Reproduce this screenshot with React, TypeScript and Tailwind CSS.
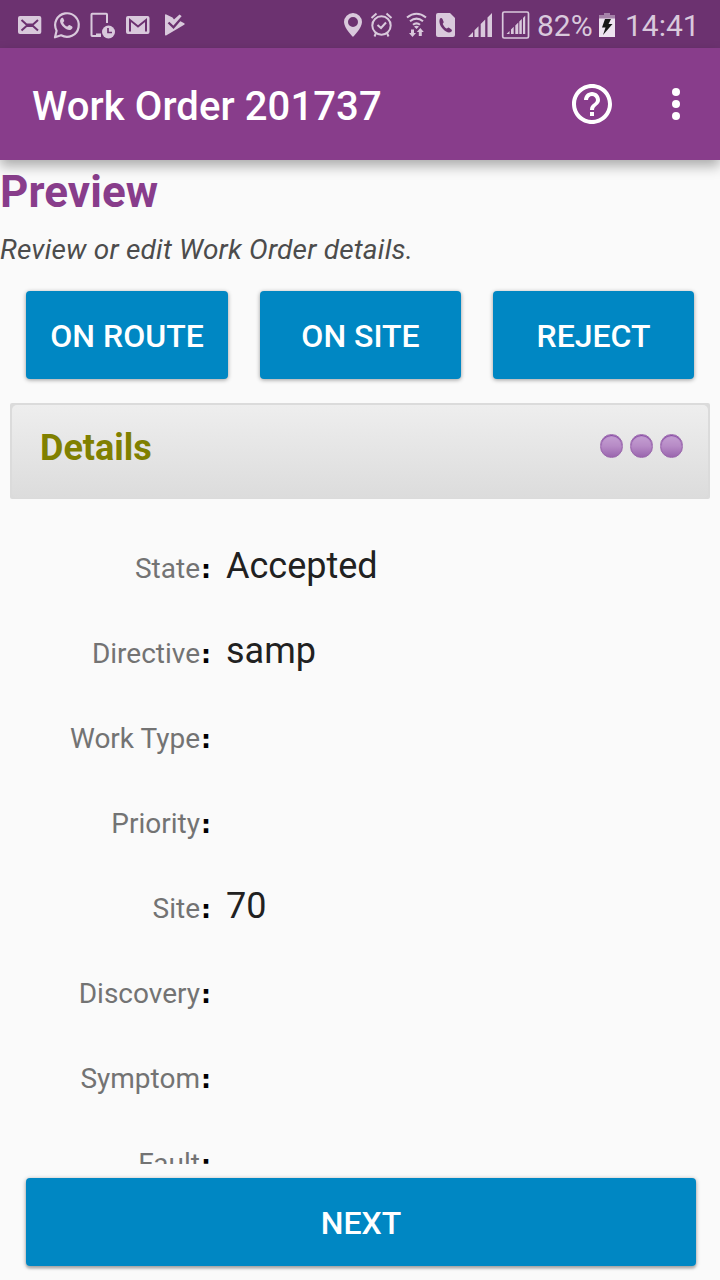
import type { ReactNode } from "react";

const rows: [string, string][] = [
  ["State", "Accepted"],
  ["Directive", "samp"],
  ["Work Type", ""],
  ["Priority", ""],
  ["Site", "70"],
  ["Discovery", ""],
  ["Symptom", ""],
  ["Fault", ""],
];

// Status bar glyph: a slice of the 48px high bar, starting at x and w pixels wide.
function Glyph({ x, w, children }: { x: number; w: number; children: ReactNode }) {
  return (
    <svg width={w} height={48} viewBox={`${x} 0 ${w} 48`} fill="#d9c9dc" className="block shrink-0">
      {children}
    </svg>
  );
}

function StatusBar() {
  return (
    <div className="flex h-12 shrink-0 justify-between bg-[#6c3270] text-[#d9c9dc]">
      <div className="flex">
        <Glyph x={0} w={48}>
          <rect x="18" y="16" width="23.3" height="18" rx="2" />
          <path d="M21.500 20l5 4.500h6.500L38 20M21.500 30.500l5-4.500h6.500l5 4.500" stroke="#6c3270" strokeWidth="2" fill="none" />
        </Glyph>
        <Glyph x={48} w={37}>
          <path d="M55 37.300l1.600-6.600a11.800 11.800 0 1 1 4.500 4.600z" fill="none" stroke="#d9c9dc" strokeWidth="2.200" strokeLinejoin="round" />
          <path d="M61 18.500c-2 2.200-.5 5.700 2.500 8.500 3 2.800 6.500 4.200 8.500 1.800.8-1 .7-2-.2-2.500l-2.300-1.200c-1-.4-1.500 1.800-2.500 1.400-1.700-.7-3-2.100-3.800-3.800-.2-.8 1.300-1.300 1-2.300l-1-2.200c-.5-.9-1.600-.5-2.200.3z" />
        </Glyph>
        <Glyph x={85} w={35}>
          <path d="M107 23v-8.500q0-.700-.700-.700H92.200q-.7 0-.7.700v20.800q0 .7.700.7H101" fill="none" stroke="#d9c9dc" strokeWidth="2" />
          <rect x="96" y="33.500" width="5" height="2" />
          <circle cx="108.500" cy="32" r="6.500" />
          <path d="M108 28v4.500h4" fill="none" stroke="#6c3270" strokeWidth="1.700" />
        </Glyph>
        <Glyph x={120} w={36}>
          <rect x="126" y="16" width="23.500" height="18" rx="2" />
          <path d="M130 31.500V20l8 6.500 8-6.500v11.500" fill="none" stroke="#6c3270" strokeWidth="2" />
        </Glyph>
        <Glyph x={156} w={34}>
          <path d="M165 15.300q0-1.500 1.300-.9l6.200 3 1.500 2 5.500-5 2 1.500-1.500 5 4.200 2.400q1.200.8 0 1.500l-17.700 10.500q-1.500.8-1.500-.7z" />
          <path d="M168.500 22.500l5 4.800L182 17.500" fill="none" stroke="#6c3270" strokeWidth="2.300" />
        </Glyph>
      </div>
      <div className="flex">
        <Glyph x={338} w={30}>
          <path fillRule="evenodd" d="M353 13a9 9 0 0 0-9 9c0 6 9 15 9 15s9-9 9-15a9 9 0 0 0-9-9zm0 4a5 5 0 1 1 0 10 5 5 0 0 1 0-10z" />
        </Glyph>
        <Glyph x={368} w={30}>
          <g fill="none" stroke="#d9c9dc" strokeWidth="2">
            <circle cx="381.500" cy="25.500" r="9.200" />
            <path d="M371.500 18l5-4.500M391.500 18l-5-4.500M376 33l-1.500 3.500M387 33l1.500 3.500M377.500 25l3.500 3 5-5.500" />
          </g>
        </Glyph>
        <Glyph x={398} w={32}>
          <g fill="none" stroke="#d9c9dc" strokeWidth="2.100">
            <path d="M407 17.500q9.500-7.500 19 0M410 21.300q6.500-5.300 13 0M413 24.800q3.500-3 7 0" />
          </g>
          <path d="M414 26.500q2.500-1.500 5 0l-2.500 2.500zM411 29.500h3v3.500h2l-3.500 4L409 33h2zM420.300 28l3.500 4h-2v4h-3v-4h-2z" />
        </Glyph>
        <Glyph x={430} w={32}>
          <path d="M438 13h12l5 5v17q0 2-2 2h-15q-2 0-2-2V15q0-2 2-2z" />
          <path d="M440 18.500c-1.500 3 0 7.500 3 10.500 3 3 6 4.500 8.500 2.500.7-.8.5-1.800-.3-2.300l-2.200-1.500c-1.300-.5-1.500 1.300-2.500.8-1.700-1-3-2.700-3.700-4.500-.2-.8 1.300-1.200.8-2.300l-1.100-2.800c-.6-1.100-1.800-1.200-2.500-.4z" fill="#6c3270" />
        </Glyph>
        <Glyph x={462} w={36}>
          <path d="M468 37l5-5v5zM474.500 37v-6.700l4-4V37zM480.700 37V24.100l4.500-4.500V37zM487.500 37V17.500l4.500-4.500V37z" />
        </Glyph>
        <Glyph x={498} w={39}>
          <rect x="502.700" y="12" width="25.800" height="26" rx="1.500" fill="none" stroke="#d9c9dc" strokeWidth="1.700" />
          <path d="M506.500 34l3-3v3zM511 34v-4.500l2.700-2.700V34zM515.300 34v-8.500l3-3V34zM519.300 34V21.500l2.500-2.500V34zM523 34v-16l2.200-2.200V34z" />
        </Glyph>
        <span className="w-[58px] text-[30px] leading-[51px]">82%</span>
        <Glyph x={595} w={30}>
          <path d="M604 13h6v2h5v4h-16v-4h5z" fill="#a481a8" />
          <rect x="599" y="18.500" width="16" height="18.500" fill="#eee4f0" />
          <path d="M605 19h6l-2.500 5h4l-9.500 11 2.500-7.500h-3.500z" fill="#171717" />
        </Glyph>
        <span className="w-[95px] text-[30px] leading-[51px]">14:41</span>
      </div>
    </div>
  );
}

function AppBar() {
  return (
    <header className="relative z-10 flex h-28 shrink-0 items-center bg-[#883d8b] pl-8 text-white shadow-[0_6px_12px_rgba(0,0,0,0.32)]">
      <h1 className="flex-1 pt-[5px] text-[40px] leading-[49px] font-medium tracking-[0.1px]">Work Order 201737</h1>
      <svg width="48" height="48" viewBox="0 0 24 24" fill="currentColor" className="mr-9">
        <path d="M11 18h2v-2h-2v2zm1-16C6.480 2 2 6.480 2 12s4.480 10 10 10 10-4.480 10-10S17.520 2 12 2zm0 18c-4.410 0-8-3.590-8-8s3.590-8 8-8 8 3.590 8 8-3.590 8-8 8zm0-14c-2.210 0-4 1.790-4 4h2c0-1.100.9-2 2-2s2 .9 2 2c0 2-3 1.750-3 5h2c0-2.250 3-2.500 3-5 0-2.210-1.790-4-4-4z" />
      </svg>
      <svg width="48" height="48" viewBox="0 0 48 48" fill="currentColor" className="mr-5">
        <circle cx="24" cy="12" r="4" />
        <circle cx="24" cy="24" r="4" />
        <circle cx="24" cy="36" r="4" />
      </svg>
    </header>
  );
}

function ActionButton({ children }: { children: ReactNode }) {
  return (
    <button className="h-[88px] w-full rounded-[4px] bg-[#0087c3] pt-[2px] text-[32px] font-medium text-white shadow-[0_1px_4px_rgba(0,0,0,0.38)]">
      {children}
    </button>
  );
}

function Orb() {
  return (
    <span className="h-6 w-[23px] rounded-full border border-[#9a68ac] bg-linear-to-b from-[#c5a1d3] via-[#b78bc6] to-[#9a66ae] shadow-[inset_0_1px_1px_#8142a0]" />
  );
}

export default function App() {
  return (
    <div className="flex h-[1280px] w-[720px] flex-col overflow-hidden bg-[#fafafa] font-['Roboto',sans-serif]">
      <StatusBar />
      <AppBar />
      <h2 className="h-16 shrink-0 text-[44px] leading-[64px] font-bold tracking-[0.1px] text-[#883d8b]">Preview</h2>
      <p className="h-[67px] shrink-0 text-[28px] leading-[51px] tracking-[0.2px] text-[#4c4c4c] italic">Review or edit Work Order details.</p>
      <div className="grid shrink-0 grid-cols-[202px_201px_201px] gap-x-8 px-[26px]">
        <ActionButton>ON ROUTE</ActionButton>
        <ActionButton>ON SITE</ActionButton>
        <ActionButton>REJECT</ActionButton>
      </div>
      <div className="mx-2.5 mt-6 h-24 shrink-0 rounded-[2px] bg-[#dbdbdb] px-[2px] pt-[2px] pb-px">
        <div className="flex h-full items-start justify-between rounded-[5px] bg-linear-to-b from-[#eeeeee] to-[#dcdcdc] pr-[25px] pl-7">
          <h3 className="text-[36px] leading-[86px] font-bold text-[#808000]">Details</h3>
          <div className="flex gap-[7px] pt-[29px]">
            <Orb />
            <Orb />
            <Orb />
          </div>
        </div>
      </div>
      <div className="h-[665px] shrink-0 overflow-hidden pt-[25px]">
        {rows.map(([label, value]) => (
          <div key={label} className="flex h-[85px] items-baseline">
            <span className="w-[200px] text-right text-[28px] text-[#737373]">{label}</span>
            <span className="w-[26px] pl-px font-['DejaVu_Sans',sans-serif] text-[25px] font-bold text-black">:</span>
            <span className="text-[36px] leading-[85px] text-[#212121]">{value || "\u00a0"}</span>
          </div>
        ))}
      </div>
      <div className="h-[106px] shrink-0 pt-3.5 pr-6 pl-[26px]">
        <div className="rounded-[4px] shadow-[0_3px_2px_rgba(0,0,0,0.12)]">
          <ActionButton>NEXT</ActionButton>
        </div>
      </div>
    </div>
  );
}
